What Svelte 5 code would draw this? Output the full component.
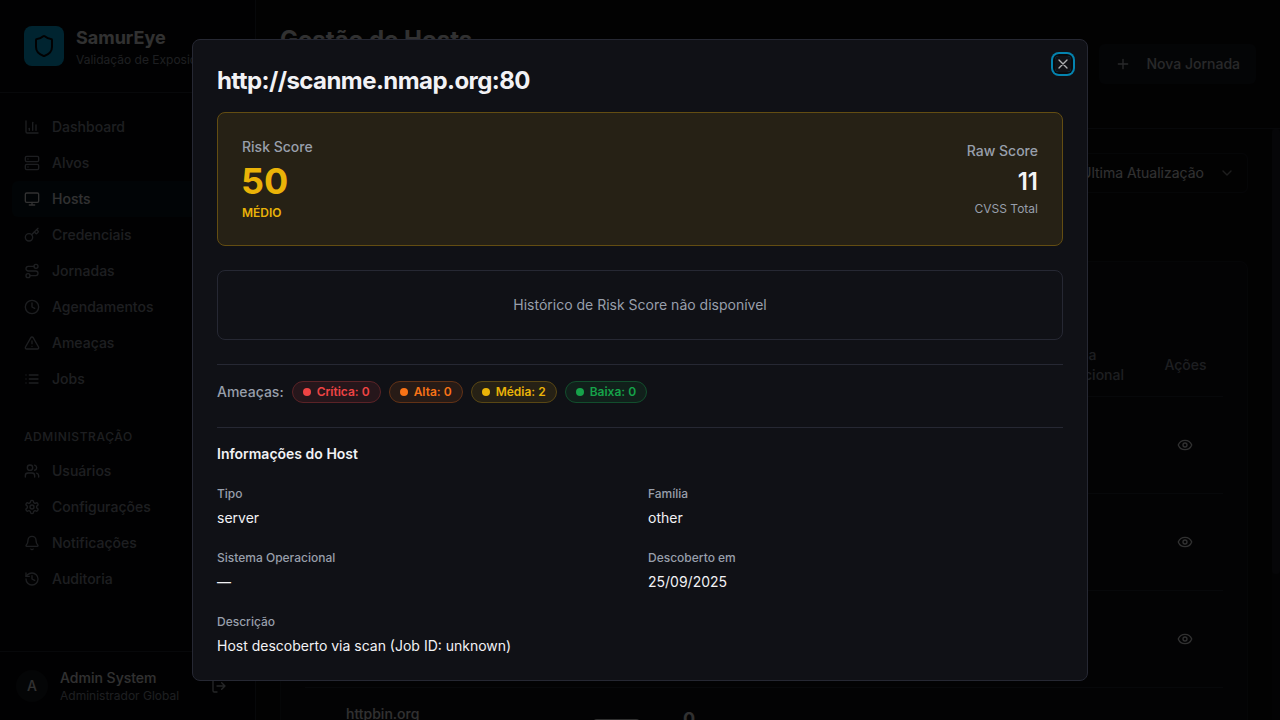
<script>
  const icons = {
    chart: '<path d="M3 3v16a2 2 0 0 0 2 2h16"/><path d="M18 17V9"/><path d="M13 17V5"/><path d="M8 17v-3"/>',
    server: '<rect width="20" height="8" x="2" y="2" rx="2"/><rect width="20" height="8" x="2" y="14" rx="2"/><path d="M6 6h.01M6 18h.01"/>',
    monitor: '<rect width="20" height="14" x="2" y="3" rx="2"/><path d="M8 21h8M12 17v4"/>',
    key: '<path d="m15.5 7.5 2.3 2.3a1 1 0 0 0 1.4 0l2.1-2.1a1 1 0 0 0 0-1.4L19 4"/><path d="m21 2-9.6 9.6"/><circle cx="7.5" cy="15.5" r="5.5"/>',
    route: '<circle cx="6" cy="19" r="3"/><path d="M9 19h8.5a3.5 3.5 0 0 0 0-7h-11a3.5 3.5 0 0 1 0-7H15"/><circle cx="18" cy="5" r="3"/>',
    clock: '<circle cx="12" cy="12" r="10"/><path d="M12 6v6l4 2"/>',
    alert: '<path d="m21.73 18-8-14a2 2 0 0 0-3.48 0l-8 14A2 2 0 0 0 4 21h16a2 2 0 0 0 1.73-3"/><path d="M12 9v4M12 17h.01"/>',
    list: '<path d="M3 12h.01M3 18h.01M3 6h.01M8 12h13M8 18h13M8 6h13"/>',
    users: '<path d="M16 21v-2a4 4 0 0 0-4-4H6a4 4 0 0 0-4 4v2"/><circle cx="9" cy="7" r="4"/><path d="M22 21v-2a4 4 0 0 0-3-3.87M16 3.13a4 4 0 0 1 0 7.75"/>',
    settings: '<path d="M12.22 2h-.44a2 2 0 0 0-2 2v.18a2 2 0 0 1-1 1.73l-.43.25a2 2 0 0 1-2 0l-.15-.08a2 2 0 0 0-2.73.73l-.22.38a2 2 0 0 0 .73 2.73l.15.1a2 2 0 0 1 1 1.72v.51a2 2 0 0 1-1 1.74l-.15.09a2 2 0 0 0-.73 2.73l.22.38a2 2 0 0 0 2.73.73l.15-.08a2 2 0 0 1 2 0l.43.25a2 2 0 0 1 1 1.73V20a2 2 0 0 0 2 2h.44a2 2 0 0 0 2-2v-.18a2 2 0 0 1 1-1.73l.43-.25a2 2 0 0 1 2 0l.15.08a2 2 0 0 0 2.73-.73l.22-.39a2 2 0 0 0-.73-2.73l-.15-.08a2 2 0 0 1-1-1.74v-.5a2 2 0 0 1 1-1.74l.15-.09a2 2 0 0 0 .73-2.73l-.22-.38a2 2 0 0 0-2.73-.73l-.15.08a2 2 0 0 1-2 0l-.43-.25a2 2 0 0 1-1-1.73V4a2 2 0 0 0-2-2z"/><circle cx="12" cy="12" r="3"/>',
    bell: '<path d="M10.27 21a2 2 0 0 0 3.46 0"/><path d="M3.26 15.33A1 1 0 0 0 4 17h16a1 1 0 0 0 .74-1.67C19.41 13.96 18 12.5 18 8A6 6 0 0 0 6 8c0 4.5-1.41 5.96-2.74 7.33"/>',
    history: '<path d="M3 12a9 9 0 1 0 9-9 9.75 9.75 0 0 0-6.74 2.74L3 8"/><path d="M3 3v5h5"/><path d="M12 7v5l4 2"/>',
    logout: '<path d="M9 21H5a2 2 0 0 1-2-2V5a2 2 0 0 1 2-2h4"/><path d="m16 17 5-5-5-5M21 12H9"/>',
    shield: '<path d="M20 13c0 5-3.5 7.5-7.66 8.95a1 1 0 0 1-.67-.01C7.5 20.5 4 18 4 13V6a1 1 0 0 1 1-1c2 0 4.5-1.2 6.24-2.72a1.17 1.17 0 0 1 1.52 0C14.51 3.81 17 5 19 5a1 1 0 0 1 1 1z"/>',
    plus: '<path d="M5 12h14M12 5v14"/>',
    chevron: '<path d="m6 9 6 6 6-6"/>',
    eye: '<path d="M2.06 12.35a1 1 0 0 1 0-.7 10.75 10.75 0 0 1 19.88 0 1 1 0 0 1 0 .7 10.75 10.75 0 0 1-19.88 0"/><circle cx="12" cy="12" r="3"/>',
    close: '<path d="M18 6 6 18M6 6l12 12"/>'
  };
  const mainNav = [
    ['chart', 'Dashboard'], ['server', 'Alvos'], ['monitor', 'Hosts'], ['key', 'Credenciais'],
    ['route', 'Jornadas'], ['clock', 'Agendamentos'], ['alert', 'Ameaças'], ['list', 'Jobs']
  ];
  const adminNav = [['users', 'Usuários'], ['settings', 'Configurações'], ['bell', 'Notificações'], ['history', 'Auditoria']];
  const threats = [
    ['critical', 'Crítica: 0'], ['high', 'Alta: 0'], ['medium', 'Média: 2'], ['low', 'Baixa: 0']
  ];
  const info = [
    ['Tipo', 'server'], ['Família', 'other'], ['Sistema Operacional', '—'],
    ['Descoberto em', '25/09/2025'], ['Descrição', 'Host descoberto via scan (Job ID: unknown)']
  ];
</script>

{#snippet icon(name, size = 16)}
  <svg width={size} height={size} viewBox="0 0 24 24" fill="none" stroke="currentColor" stroke-width="2" stroke-linecap="round" stroke-linejoin="round">{@html icons[name]}</svg>
{/snippet}

{#snippet links(items)}
  {#each items as [glyph, label]}
    <div class="link" class:active={label === 'Hosts'}>{@render icon(glyph)}<span>{label}</span></div>
  {/each}
{/snippet}

<div class="app">
  <aside>
    <div class="brand">
      <div class="logo">{@render icon('shield', 24)}</div>
      <div class="brand-text">
        <h1>SamurEye</h1>
        <p>Validação de Exposição</p>
      </div>
    </div>
    <nav>
      {@render links(mainNav)}
      <div class="group">Administração</div>
      {@render links(adminNav)}
    </nav>
    <div class="user">
      <div class="avatar">A</div>
      <div class="who"><b>Admin System</b><span>Administrador Global</span></div>
      <div class="logout">{@render icon('logout')}</div>
    </div>
  </aside>

  <main>
    <header>
      <h2>Gestão de Hosts</h2>
      <button class="new">{@render icon('plus')}Nova Jornada</button>
    </header>
    <div class="scroll">
      <div class="content">
        <div class="filters"><div class="select"><span>Última Atualização</span>{@render icon('chevron')}</div></div>
        <section class="table">
          <div class="tr head"><span class="last">Sistema<br />Operacional</span><span class="act">Ações</span></div>
          {#each [1, 2, 3] as n (n)}
            <div class="tr"><span></span><span class="act eye">{@render icon('eye')}</span></div>
          {/each}
          <div class="tr host"><span class="name">httpbin.org</span><span class="chip"></span><b>0</b></div>
        </section>
      </div>
      <div class="bar"><div class="thumb"></div></div>
    </div>
  </main>
</div>

<div class="overlay"></div>
<div class="dialog" role="dialog">
  <button class="close" aria-label="Fechar">{@render icon('close')}</button>
  <h2 class="title">http://scanme.nmap.org:80</h2>
  <div class="risk">
    <div>
      <div class="cap">Risk Score</div>
      <div class="score">50</div>
      <div class="level">MÉDIO</div>
    </div>
    <div class="raw">
      <div class="cap">Raw Score</div>
      <div class="rawscore">11</div>
      <div class="cvss">CVSS Total</div>
    </div>
  </div>
  <div class="empty">Histórico de Risk Score não disponível</div>
  <div class="threats">
    <span class="cap">Ameaças:</span>
    {#each threats as [kind, label]}
      <span class="badge {kind}"><i></i>{label}</span>
    {/each}
  </div>
  <div class="info">
    <h3>Informações do Host</h3>
    <dl>
      {#each info as [label, value]}
        <div><dt>{label}</dt><dd>{value}</dd></div>
      {/each}
    </dl>
  </div>
</div>

<style>
  :global(body) { margin: 0; background: #0b0b0e; overflow: hidden; }
  :global(#app) { font: 14px/20px Inter, sans-serif; color: #f2f2f5; }
  * { box-sizing: border-box; }
  h1, h2, h3, p, dl, dd { margin: 0; }
  button { font: inherit; color: inherit; border: 0; padding: 0; background: none; }
  svg { display: block; flex: none; }

  .app { display: flex; width: 1280px; height: 720px; overflow: hidden; background: #0b0b0d; }
  aside { width: 256px; flex: none; display: flex; flex-direction: column; background: #08080a; border-right: 1px solid #262833; }
  .brand { display: flex; align-items: center; gap: 12px; height: 93px; padding: 24px; border-bottom: 1px solid #262833; }
  .logo { width: 40px; height: 40px; flex: none; border-radius: 8px; background: #00b4f0; color: #08080a; display: grid; place-items: center; }
  .brand-text { white-space: nowrap; }
  h1 { font-size: 18px; line-height: 28px; font-weight: 700; }
  p { font-size: 12px; line-height: 16px; color: #9298a5; }
  nav { flex: 1; padding: 16px 12px; }
  .link { display: flex; align-items: center; gap: 12px; height: 36px; padding: 0 12px; border-radius: 6px; font-weight: 500; color: #9298a5; }
  .active { background: #06161f; color: #f2f2f5; }
  .group { margin: 32px 12px 8px; font-size: 12px; line-height: 16px; font-weight: 500; letter-spacing: .6px; text-transform: uppercase; color: #9298a5; }
  .user { height: 69px; border-top: 1px solid #262833; padding: 16px; display: flex; align-items: center; gap: 12px; }
  .avatar { width: 32px; height: 32px; border-radius: 50%; background: #16191f; display: grid; place-items: center; font-weight: 500; }
  .who { flex: 1; white-space: nowrap; }
  .who b { display: block; font-weight: 500; }
  .who span { display: block; font-size: 12px; line-height: 16px; color: #9298a5; }
  .logout { padding: 12px; color: #b8bcc5; }

  main { flex: 1; min-width: 0; display: flex; flex-direction: column; }
  header { height: 129px; flex: none; padding: 24px; display: flex; justify-content: space-between; background: #0b0b0d; border-bottom: 1px solid #262833; }
  header h2 { font-size: 24px; line-height: 32px; font-weight: 700; }
  .new { align-self: center; display: flex; align-items: center; gap: 16px; height: 40px; padding: 0 16px; border-radius: 6px; background: #16191f; color: #c8cad0; font-weight: 500; }
  .scroll { flex: 1; min-height: 0; display: flex; }
  .content { flex: 1; padding: 24px; height: 591px; overflow: hidden; }
  .filters { display: flex; justify-content: flex-end; height: 40px; margin-bottom: 68px; }
  .select { width: 192px; border: 1px solid #1c1e26; border-radius: 6px; padding: 0 12px 0 24px; display: flex; align-items: center; justify-content: space-between; white-space: nowrap; }
  .select svg { opacity: .6; }
  .table { height: 600px; border: 1px solid #1c1e26; border-radius: 8px; padding: 72px 24px 0; background: #101014; }
  .tr { display: flex; align-items: center; justify-content: flex-end; height: 97px; border-bottom: 1px solid #262833; }
  .head { height: 63px; color: #9298a5; font-weight: 500; }
  .last { margin-right: 24px; }
  .act { width: 75px; text-align: center; }
  .eye { width: 76px; display: grid; place-items: center; color: #f2f2f5; }
  .host { align-items: flex-start; justify-content: flex-start; padding: 16px 0 0 41px; font-weight: 500; }
  .name { width: 247px; }
  .chip { width: 47px; height: 22px; margin-top: 15px; border-radius: 4px; background: #eee; }
  .host b { margin: 0 0 0 43px; padding-top: 1px; font-size: 18px; line-height: 28px; font-weight: 700; }
  .bar { width: 8px; background: #101116; }
  .thumb { height: 445px; background: #1e2028; border-radius: 4px; }

  .overlay { position: fixed; inset: 0; background: rgba(0, 0, 0, .8); }
  .dialog { position: fixed; left: 50%; top: 50%; transform: translate(-50%, -50%); width: 896px; height: 642px; padding: 24px; border: 1px solid #262833; border-radius: 8px; background: #101116; }
  .close { position: absolute; top: 16px; right: 16px; opacity: .7; border-radius: 4px; box-shadow: 0 0 0 2px #08080a, 0 0 0 4px #00b4f0; }
  .title { height: 32px; padding-top: 1px; font-size: 24px; line-height: 31px; font-weight: 700; letter-spacing: -.57px; }
  .risk { margin-top: 16px; height: 134px; padding: 24px; border: 1px solid #634d12; border-radius: 8px; background: #262115; display: flex; align-items: center; justify-content: space-between; }
  .cap { font-weight: 500; color: #989fab; }
  .score { margin: 4px 0 4px -1px; font-size: 36px; line-height: 40px; font-weight: 700; color: #eab308; }
  .level { font-size: 12px; line-height: 16px; font-weight: 600; color: #eab308; }
  .raw { text-align: right; }
  .rawscore { margin: 5px 0 3px; font-size: 24px; line-height: 32px; font-weight: 600; }
  .cvss { font-size: 12px; line-height: 16px; color: #989fab; }
  .empty { margin: 24px 0; padding: 24px; border: 1px solid #262833; border-radius: 8px; text-align: center; color: #989fab; }
  .threats { display: flex; align-items: center; gap: 8px; padding: 16px 0 24px; border-top: 1px solid #262833; }
  .badge { display: flex; align-items: center; gap: 6px; height: 22px; padding: 0 10px; border: 1px solid; border-radius: 11px; font-size: 12px; line-height: 16px; font-weight: 600; }
  .badge i { width: 8px; height: 8px; border-radius: 50%; background: currentColor; }
  .critical { color: #ef4444; background: #26161b; border-color: #5b2327; }
  .high { color: #f97316; background: #271b16; border-color: #623216; }
  .medium { color: #eab308; background: #262115; border-color: #594714; }
  .low { color: #16a34a; background: #11201b; border-color: #124e2d; }
  .info { padding-top: 16px; border-top: 1px solid #262833; }
  h3 { font-size: 14px; line-height: 20px; font-weight: 600; }
  dl { display: grid; grid-template-columns: 1fr 1fr; gap: 22px 16px; margin-top: 22px; }
  dt { font-size: 12px; line-height: 16px; font-weight: 500; color: #989fab; }
  dd { margin-top: 6px; white-space: nowrap; }
</style>
